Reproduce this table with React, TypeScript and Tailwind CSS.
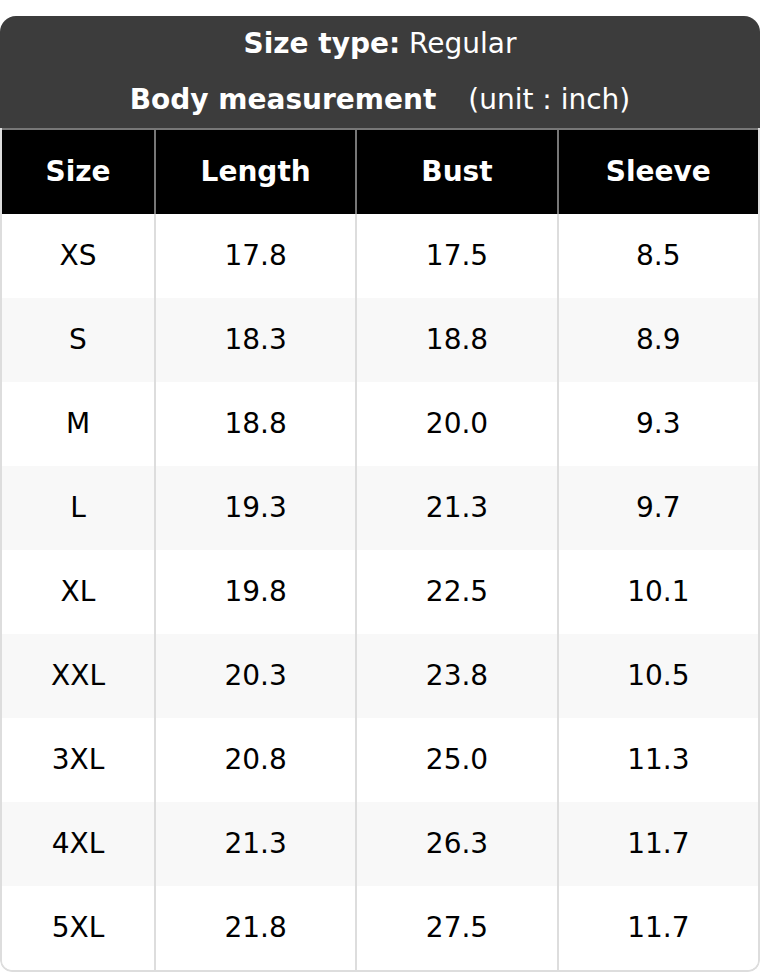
import React from "react";

const rows = [
  ["XS", "17.8", "17.5", "8.5"],
  ["S", "18.3", "18.8", "8.9"],
  ["M", "18.8", "20.0", "9.3"],
  ["L", "19.3", "21.3", "9.7"],
  ["XL", "19.8", "22.5", "10.1"],
  ["XXL", "20.3", "23.8", "10.5"],
  ["3XL", "20.8", "25.0", "11.3"],
  ["4XL", "21.3", "26.3", "11.7"],
  ["5XL", "21.8", "27.5", "11.7"],
];

const headers = ["Size", "Length", "Bust", "Sleeve"];

export default function App() {
  return (
    <div className="bg-white w-[760px] pt-[16px]" style={{ fontFamily: '"DejaVu Sans", sans-serif' }}>
      <div className="rounded-t-[16px] rounded-b-[12px] overflow-hidden">
        {/* Title block */}
        <div className="bg-[#3c3c3c] text-white text-[28px] text-center">
          <div className="h-[56px] flex items-center justify-center">
            <span className="font-bold">Size type:</span>&nbsp;Regular
          </div>
          <div className="h-[56px] flex items-center justify-center">
            <span className="font-bold">Body measurement</span>
            <span className="ml-[32px]">(unit : inch)</span>
          </div>
        </div>

        <div className="border-x-2 border-b-2 border-[#dddddd] rounded-b-[12px] overflow-hidden">
          <div className="grid grid-cols-[152px_1fr_1fr_1fr] bg-black text-white font-bold text-[28px] border-t-2 border-[#777777] h-[86px] -mx-[2px] border-x-2">
            {headers.map((h, i) => (
              <div
                key={h}
                className={`flex items-center justify-center ${i > 0 ? "border-l-2 border-[#777777]" : ""}`}
              >
                {h}
              </div>
            ))}
          </div>
          {rows.map((r, ri) => (
            <div
              key={r[0]}
              className={`grid grid-cols-[152px_1fr_1fr_1fr] h-[84px] text-[28px] text-black ${
                ri % 2 === 1 ? "bg-[#f8f8f8]" : "bg-white"
              }`}
            >
              {r.map((c, ci) => (
                <div
                  key={ci}
                  className={`flex items-center justify-center ${ci > 0 ? "border-l-2 border-[#dddddd]" : ""}`}
                >
                  {c}
                </div>
              ))}
            </div>
          ))}
        </div>
      </div>
    </div>
  );
}
